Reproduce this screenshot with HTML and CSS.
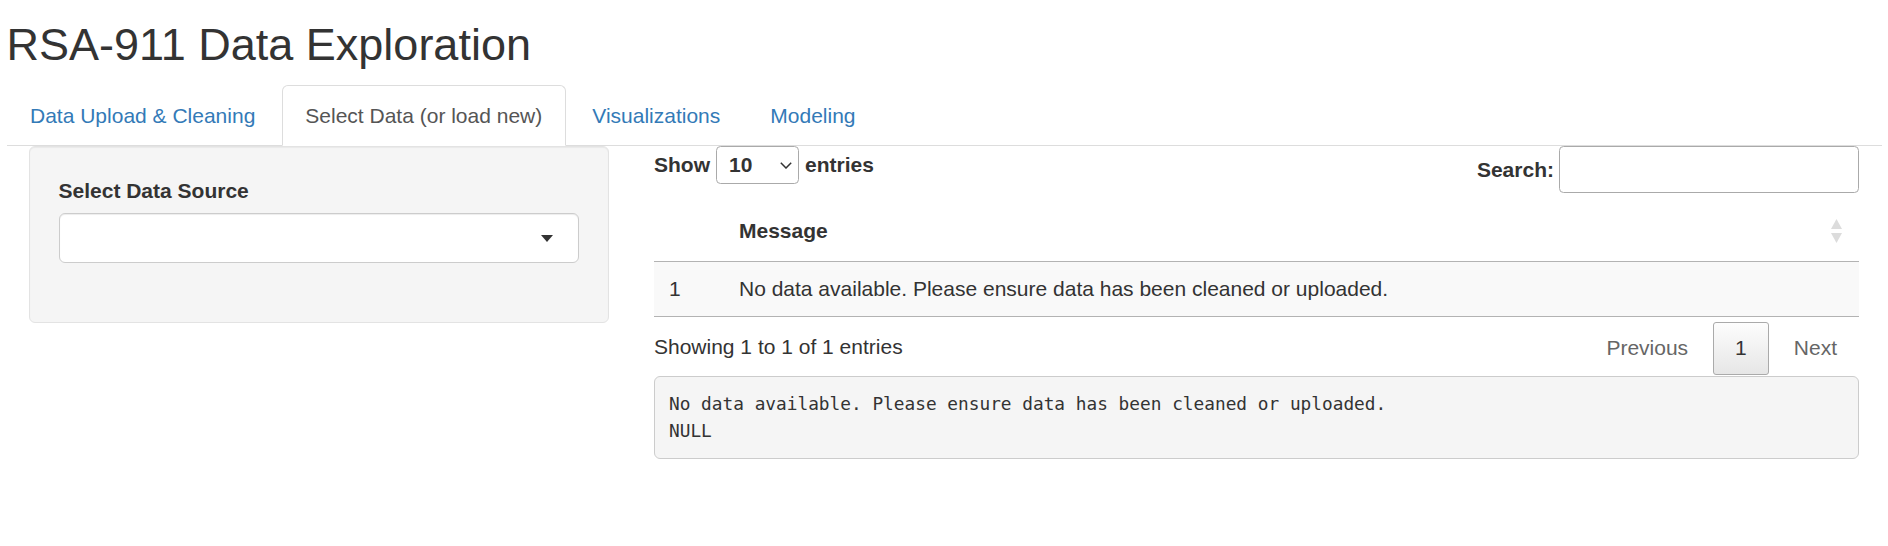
FILE: index.html
```html
<!DOCTYPE html>
<html>
<head>
<meta charset="utf-8">
<title>RSA-911 Data Exploration</title>
<link rel="stylesheet" href="styles.css">
</head>
<body>
<div class="container">
  <h2 class="title">RSA-911 Data Exploration</h2>
  <ul class="tabs">
    <li class="tab"><a>Data Upload &amp; Cleaning</a></li>
    <li class="tab active"><a>Select Data (or load new)</a></li>
    <li class="tab"><a>Visualizations</a></li>
    <li class="tab"><a>Modeling</a></li>
  </ul>
  <div class="row">
    <div class="col-side">
      <div class="well">
        <div class="form-group">
          <label class="field-label">Select Data Source</label>
          <div class="selectize"><span class="caret"></span></div>
        </div>
      </div>
    </div>
    <div class="col-main">
      <div class="dt-top">
        <div class="dt-length">
          <span>Show</span>
          <div class="len-select">
            <span>10</span>
            <svg class="chev" width="12" height="7" viewBox="0 0 12 7"><polyline points="0.8,0.8 6,6 11.2,0.8" fill="none" stroke="#333" stroke-width="1.5"/></svg>
          </div>
          <span class="entries">entries</span>
        </div>
        <div class="dt-filter">
          <span>Search:</span>
          <input class="search" type="search">
        </div>
      </div>
      <table class="dt">
        <colgroup><col class="c1"><col class="c2"></colgroup>
        <thead>
          <tr>
            <th></th>
            <th class="sortable">
              <div class="th-inner">
                <span>Message</span>
                <svg class="sort" width="11" height="24" viewBox="0 0 11 24"><polygon points="0,10 5.5,0 11,10" fill="#dcdcdc"/><polygon points="0,14 11,14 5.5,24" fill="#dcdcdc"/></svg>
              </div>
            </th>
          </tr>
        </thead>
        <tbody>
          <tr>
            <td>1</td>
            <td>No data available. Please ensure data has been cleaned or uploaded.</td>
          </tr>
        </tbody>
      </table>
      <div class="dt-bottom">
        <div class="info">Showing 1 to 1 of 1 entries</div>
        <div class="paginate">
          <span class="pbtn disabled">Previous</span>
          <span class="pbtn current">1</span>
          <span class="pbtn disabled">Next</span>
        </div>
      </div>
      <pre class="out">No data available. Please ensure data has been cleaned or uploaded.
NULL</pre>
    </div>
  </div>
</div>
</body>
</html>
```

FILE: styles.css
```css
* { box-sizing: border-box; }

html, body {
  margin: 0;
  padding: 0;
  background: #fff;
}

body {
  font-family: "Liberation Sans", Arial, sans-serif;
  font-size: 21px;
  line-height: 30px;
  color: #333;
}

.container {
  padding: 0 6.5px;
}

.title {
  font-size: 45px;
  line-height: 49.5px;
  font-weight: normal;
  margin: 20px 0 15.5px;
  color: #333;
}

/* tabs */
.tabs {
  list-style: none;
  margin: 0;
  padding: 0;
  display: flex;
  border-bottom: 1px solid #ddd;
}

.tab {
  margin-right: 3px;
  margin-bottom: -1px;
}

.tab a {
  display: block;
  padding: 15px 22.5px 14px;
  border: 1px solid transparent;
  border-radius: 6px 6px 0 0;
  color: #337ab7;
  line-height: 30px;
}

.tab.active a {
  color: #555;
  background: #fff;
  border-color: #ddd;
  border-bottom-color: transparent;
}

/* layout */
.row {
  display: flex;
}

.col-side {
  width: 33.3333%;
  padding: 0 22.5px;
}

.col-main {
  width: 66.6667%;
  padding: 0 22.5px;
}

/* sidebar */
.well {
  background: #f5f5f5;
  border: 1px solid #e3e3e3;
  border-radius: 6px;
  padding: 28.5px;
  box-shadow: inset 0 1px 1px rgba(0, 0, 0, 0.05);
}

.form-group {
  margin-bottom: 30px;
}

.field-label {
  display: block;
  font-weight: bold;
  margin-bottom: 7.5px;
}

.selectize {
  height: 50px;
  background: #fff;
  border: 1px solid #ccc;
  border-radius: 6px;
  box-shadow: inset 0 1px 1px rgba(0, 0, 0, 0.075);
  display: flex;
  align-items: center;
  justify-content: flex-end;
  padding-right: 25px;
}

.caret {
  width: 0;
  height: 0;
  border-style: solid;
  border-width: 7px 6px 0 6px;
  border-color: #333 transparent transparent transparent;
}

/* datatable top */
.dt-top {
  display: flex;
  justify-content: space-between;
  align-items: flex-start;
}

.dt-length {
  display: flex;
  align-items: center;
  height: 38px;
  font-weight: bold;
}

.len-select {
  width: 83px;
  height: 38px;
  margin-left: 6px;
  border: 1px solid #aaa;
  border-radius: 4.5px;
  background: #fff;
  display: flex;
  align-items: center;
  justify-content: space-between;
  padding: 0 6px 0 12px;
}

.chev {
  display: block;
}

.entries {
  margin-left: 6px;
}

.dt-filter {
  display: flex;
  align-items: center;
  font-weight: bold;
}

.search {
  width: 300px;
  height: 47px;
  margin: 0 0 0 5px;
  border: 1px solid #aaa;
  border-radius: 4.5px;
  background: #fff;
  font: inherit;
  padding: 0 7px;
}

/* table */
.dt {
  width: 100%;
  table-layout: fixed;
  border-collapse: separate;
  border-spacing: 0;
  margin-top: 8px;
}

.c1 { width: 70px; }

.dt th {
  text-align: left;
  font-weight: bold;
  padding: 15px;
  border-bottom: 1px solid #b3b3b3;
}

.dt th.sortable {
  padding-right: 17px;
}

.th-inner {
  display: flex;
  align-items: center;
  justify-content: space-between;
}

.sort {
  display: block;
}

.dt td {
  padding: 12px 15px;
  background: #f9f9f9;
  border-bottom: 1px solid #b3b3b3;
}

/* datatable bottom */
.dt-bottom {
  display: flex;
  justify-content: space-between;
  align-items: flex-start;
}

.info {
  padding-top: 15px;
}

.paginate {
  padding-top: 4.5px;
  display: flex;
}

.pbtn {
  display: block;
  padding: 10.5px 21px;
  margin-left: 3px;
  border: 1px solid transparent;
  border-radius: 3px;
  line-height: 30px;
  color: #666;
}

.pbtn.current {
  color: #333;
  border-color: #aaa;
  background: linear-gradient(to bottom, #fdfdfd 0%, #e6e6e6 100%);
}

/* verbatim output */
.out {
  margin: 1px 0 0;
  padding: 13px 14px 14px;
  background: #f5f5f5;
  border: 1px solid #ccc;
  border-radius: 6px;
  font-family: "DejaVu Sans Mono", "Liberation Mono", monospace;
  font-size: 17.8px;
  line-height: 27px;
  color: #333;
  white-space: pre;
}
```
